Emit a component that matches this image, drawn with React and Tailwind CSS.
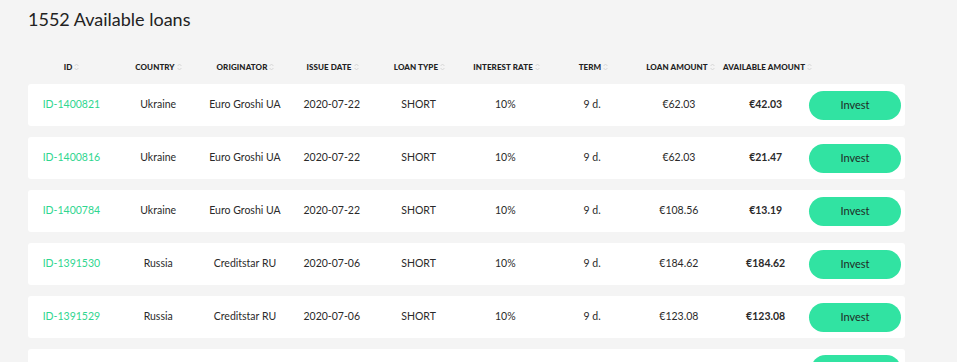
import React from 'react';

const columns = [
    'ID',
    'Country',
    'Originator',
    'Issue date',
    'Loan type',
    'Interest rate',
    'Term',
    'Loan amount',
    'Available amount',
];

const loans = [
    { id: 'ID-1400821', country: 'Ukraine', originator: 'Euro Groshi UA', date: '2020-07-22', type: 'SHORT', rate: '10%', term: '9 d.', amount: '€62.03', available: '€42.03' },
    { id: 'ID-1400816', country: 'Ukraine', originator: 'Euro Groshi UA', date: '2020-07-22', type: 'SHORT', rate: '10%', term: '9 d.', amount: '€62.03', available: '€21.47' },
    { id: 'ID-1400784', country: 'Ukraine', originator: 'Euro Groshi UA', date: '2020-07-22', type: 'SHORT', rate: '10%', term: '9 d.', amount: '€108.56', available: '€13.19' },
    { id: 'ID-1391530', country: 'Russia', originator: 'Creditstar RU', date: '2020-07-06', type: 'SHORT', rate: '10%', term: '9 d.', amount: '€184.62', available: '€184.62' },
    { id: 'ID-1391529', country: 'Russia', originator: 'Creditstar RU', date: '2020-07-06', type: 'SHORT', rate: '10%', term: '9 d.', amount: '€123.08', available: '€123.08' },
];

function SortIcon() {
    return (
        <svg width="5" height="8" viewBox="0 0 5 8" className="ml-[2px] shrink-0" fill="none" stroke="#cfcfcf" strokeWidth="0.8">
            <path d="M0.6 3 L2.5 1 L4.4 3" />
            <path d="M0.6 5 L2.5 7 L4.4 5" />
        </svg>
    );
}

export default function App() {
    return (
        <div className="min-h-screen bg-[#f4f4f4] pl-[28px] pt-[8px] text-[#2a2a2a]" style={{ fontFamily: 'Lato, "Noto Sans", sans-serif' }}>
            <h1 className="text-[18px] leading-[22px] text-[#222]">1552 Available loans</h1>

            <div className="w-[877px]">
                {/* header */}
                <div className="flex h-[31px] mt-[21px] items-center">
                    {columns.map((c) => (
                        <div key={c} className="w-[87px] flex items-center justify-center whitespace-nowrap text-[8px] font-black uppercase tracking-[0.1px] text-[#222]">
                            <span>{c}</span>
                            <SortIcon />
                        </div>
                    ))}
                </div>

                {/* rows */}
                <div className="flex flex-col gap-[11px] mt-[2px]">
                    {loans.map((l) => (
                        <div key={l.id} className="flex h-[42px] items-center bg-white rounded-[3px] text-[10.5px]">
                            <div className="w-[87px] text-center text-[#2fd68f]">{l.id}</div>
                            <div className="w-[87px] text-center">{l.country}</div>
                            <div className="w-[87px] text-center">{l.originator}</div>
                            <div className="w-[87px] text-center">{l.date}</div>
                            <div className="w-[87px] text-center">{l.type}</div>
                            <div className="w-[87px] text-center">{l.rate}</div>
                            <div className="w-[87px] text-center">{l.term}</div>
                            <div className="w-[87px] text-center">{l.amount}</div>
                            <div className="w-[87px] text-center font-bold">{l.available}</div>
                            <div className="flex-1 flex justify-end pr-[4px]">
                                <button className="w-[92px] h-[29px] rounded-full bg-[#31e3a2] text-[11px] text-[#1f2b26]">
                                    Invest
                                </button>
                            </div>
                        </div>
                    ))}
                    {/* next row, only its top edge is in view */}
                    <div className="flex h-[42px] bg-white rounded-[3px]">
                        <div className="flex-1" />
                        <div className="w-[94px] flex justify-end pr-[4px] pt-[6px]">
                            <div className="w-[92px] h-[29px] rounded-full bg-[#31e3a2]" />
                        </div>
                    </div>
                </div>
            </div>
        </div>
    );
}
